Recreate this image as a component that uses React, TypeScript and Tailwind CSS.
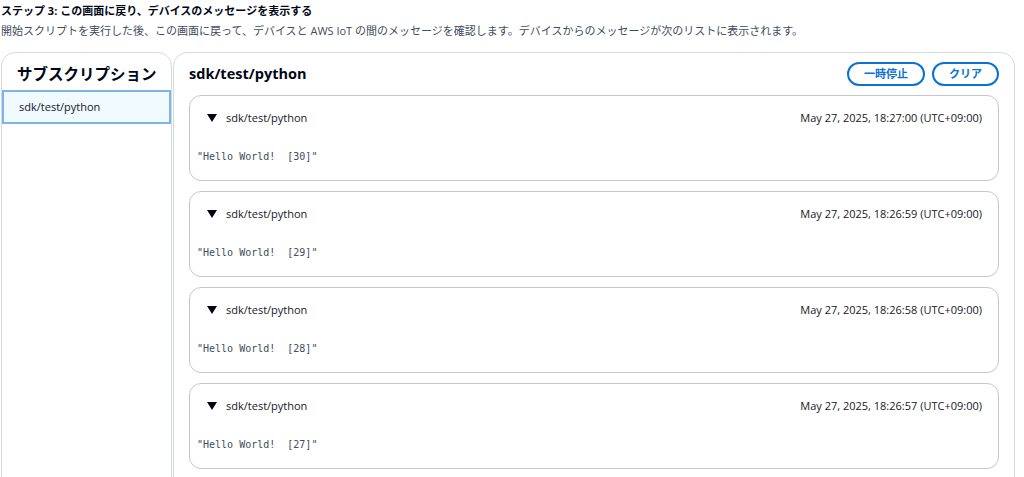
const MESSAGES = [
  { n: 30, time: "May 27, 2025, 18:27:00 (UTC+09:00)" },
  { n: 29, time: "May 27, 2025, 18:26:59 (UTC+09:00)" },
  { n: 28, time: "May 27, 2025, 18:26:58 (UTC+09:00)" },
  { n: 27, time: "May 27, 2025, 18:26:57 (UTC+09:00)" },
];

const FONT = "font-['Open_Sans','Noto_Sans_CJK_JP',sans-serif]";

function MessageCard({ n, time }: { n: number; time: string }) {
  return (
    <div className="h-[86px] shrink-0 rounded-xl border border-[#c6c6cd] bg-white">
      <div className="flex items-center pl-[17px] pr-[16px] pt-[14px] text-[11px] leading-[16px] text-[#16191f]">
        <svg width="10" height="8" viewBox="0 0 10 8" className="mr-[9px]">
          <path d="M0 0 H10 L5 8 Z" fill="#000716" />
        </svg>
        <span>sdk/test/python</span>
        <span className="ml-auto">{time}</span>
      </div>
      <div className="mt-[24px] pl-[7px] font-['DejaVu_Sans_Mono',monospace] text-[10px] leading-[14px] text-[#414d5c] whitespace-pre">
        {`"Hello World!  [${n}]"`}
      </div>
    </div>
  );
}

export default function App() {
  return (
    <div className={`${FONT} h-[477px] overflow-hidden bg-white`}>
      <div className="pl-[1px] pt-[3px]">
        <div className="text-[11px] font-bold leading-[16px] text-[#000716]">
          ステップ 3: この画面に戻り、デバイスのメッセージを表示する
        </div>
        <div className="mt-[4px] text-[11px] leading-[16px] text-[#414d5c]">
          開始スクリプトを実行した後、この画面に戻って、デバイスと AWS IoT の間のメッセージを確認します。デバイスからのメッセージが次のリストに表示されます。
        </div>
      </div>
      <div className="mt-[13px] flex gap-[1px] pl-[1px] pr-[9px]">
        <div className="h-[480px] w-[171px] shrink-0 rounded-t-[14px] border border-[#d5dbdb] bg-white">
          <div className="whitespace-nowrap px-[15px] pt-[9px] pb-[4px] text-[15.5px] font-bold leading-[24px] text-[#000716]">
            サブスクリプション
          </div>
          <div className="border-2 border-[#7cb5ec] bg-[#f1faff] px-[15px] py-[7px] text-[11px] leading-[16px] text-[#16191f]">
            sdk/test/python
          </div>
        </div>
        <div className="h-[480px] flex-1 rounded-t-[14px] border border-[#d5dbdb] bg-white px-[15px]">
          <div className="flex items-center pt-[9px] pb-[9px]">
            <div className="text-[14.5px] font-bold leading-[24px] text-[#000716]">sdk/test/python</div>
            <div className="ml-auto flex gap-[7px]">
              <button className="h-[24px] w-[78px] rounded-full border-2 border-[#0972d3] text-[11px] font-bold text-[#0972d3]">
                一時停止
              </button>
              <button className="h-[24px] w-[67px] rounded-full border-2 border-[#0972d3] text-[11px] font-bold text-[#0972d3]">
                クリア
              </button>
            </div>
          </div>
          <div className="flex flex-col gap-[10px]">
            {MESSAGES.map((m) => (
              <MessageCard key={m.n} n={m.n} time={m.time} />
            ))}
          </div>
        </div>
      </div>
    </div>
  );
}
